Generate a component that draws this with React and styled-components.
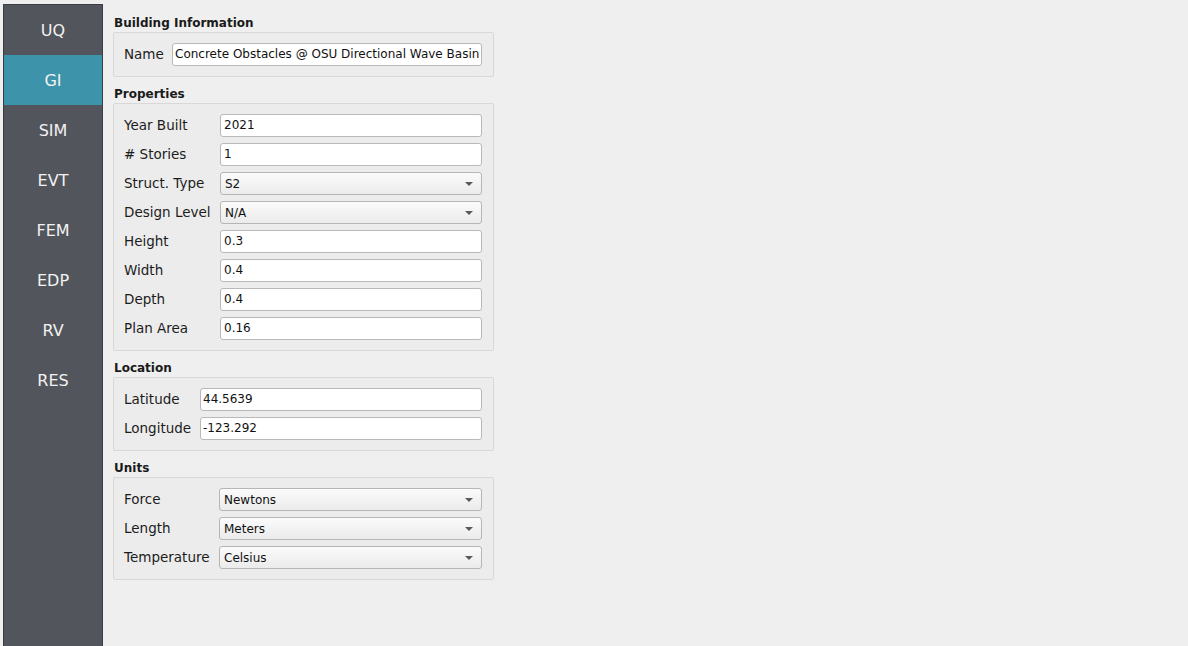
import React from 'react'
import styled, { createGlobalStyle } from 'styled-components'

const GlobalStyle = createGlobalStyle`
  html, body {
    margin: 0;
    padding: 0;
    background: #efefef;
    font-family: 'DejaVu Sans', 'Liberation Sans', sans-serif;
    color: #1a1a1a;
  }
`

const Window = styled.div({
  display: 'flex',
  flexDirection: 'row',
  alignItems: 'stretch',
  height: '646px',
  overflow: 'hidden',
})

const Sidebar = styled.div({
  flex: '0 0 98px',
  marginLeft: '3px',
  marginTop: '4px',
  display: 'flex',
  flexDirection: 'column',
  backgroundColor: '#52555c',
  border: '1px solid #3b3d42',
  borderBottom: 'none',
})

const NavItem = styled.div(({ active }) => ({
  height: '50px',
  display: 'flex',
  alignItems: 'center',
  justifyContent: 'center',
  fontSize: '16px',
  color: '#f2f2f2',
  backgroundColor: active ? '#3d93a9' : 'transparent',
}))

const Main = styled.div({
  flex: '0 0 381px',
  paddingLeft: '10px',
  paddingTop: '15px',
  display: 'flex',
  flexDirection: 'column',
})

const SectionTitle = styled.div(({ first }) => ({
  fontSize: '12px',
  fontWeight: 'bold',
  lineHeight: '16px',
  height: '16px',
  paddingLeft: '1px',
  marginTop: first ? '0' : '9px',
  marginBottom: '1px',
}))

const GroupBox = styled.div({
  border: '1px solid #d8d8d8',
  borderRadius: '2px',
  backgroundColor: '#ececec',
  padding: '10px 11px 10px 10px',
  display: 'grid',
  rowGap: '6px',
})

const Row = styled.div(({ labelWidth }) => ({
  display: 'grid',
  gridTemplateColumns: `${labelWidth}px 1fr`,
  alignItems: 'center',
  height: '23px',
}))

const Label = styled.span({
  fontSize: '13.5px',
  lineHeight: '16px',
  paddingBottom: '2px',
  color: '#1c1c1c',
  whiteSpace: 'nowrap',
})

const TextBox = styled.div(({ pad }) => ({
  height: '23px',
  boxSizing: 'border-box',
  border: '1px solid #b9b9b9',
  borderRadius: '3px',
  backgroundColor: '#ffffff',
  paddingLeft: `${pad}px`,
  fontSize: '12px',
  lineHeight: '21px',
  whiteSpace: 'nowrap',
  overflow: 'hidden',
  color: '#111',
}))

const Combo = styled.div({
  height: '23px',
  boxSizing: 'border-box',
  border: '1px solid #b6b6b6',
  borderRadius: '3px',
  background: 'linear-gradient(#fbfbfb, #ebebeb)',
  padding: '0 8px 0 4px',
  display: 'flex',
  alignItems: 'center',
  justifyContent: 'space-between',
  fontSize: '12px',
  color: '#111',
})

const Arrow = styled.span({
  width: 0,
  height: 0,
  borderLeft: '4px solid transparent',
  borderRight: '4px solid transparent',
  borderTop: '4px solid #5a5a5a',
})

const navItems = ['UQ', 'GI', 'SIM', 'EVT', 'FEM', 'EDP', 'RV', 'RES']

const sections = [
  {
    title: 'Building Information',
    labelWidth: 48,
    rows: [
      { label: 'Name', value: 'Concrete Obstacles @ OSU Directional Wave Basin', pad: 2 },
    ],
  },
  {
    title: 'Properties',
    labelWidth: 96,
    rows: [
      { label: 'Year Built', value: '2021' },
      { label: '# Stories', value: '1' },
      { label: 'Struct. Type', value: 'S2', combo: true },
      { label: 'Design Level', value: 'N/A', combo: true },
      { label: 'Height', value: '0.3' },
      { label: 'Width', value: '0.4' },
      { label: 'Depth', value: '0.4' },
      { label: 'Plan Area', value: '0.16' },
    ],
  },
  {
    title: 'Location',
    labelWidth: 76,
    rows: [
      { label: 'Latitude', value: '44.5639', pad: 2 },
      { label: 'Longitude', value: '-123.292', pad: 2 },
    ],
  },
  {
    title: 'Units',
    labelWidth: 95,
    rows: [
      { label: 'Force', value: 'Newtons', combo: true },
      { label: 'Length', value: 'Meters', combo: true },
      { label: 'Temperature', value: 'Celsius', combo: true },
    ],
  },
]

export default function App() {
  return (
    <>
      <GlobalStyle />
      <Window>
        <Sidebar>
          {navItems.map(item => (
            <NavItem key={item} active={item === 'GI'}>
              {item}
            </NavItem>
          ))}
        </Sidebar>
        <Main>
          {sections.map((section, i) => (
            <React.Fragment key={section.title}>
              <SectionTitle first={i === 0}>{section.title}</SectionTitle>
              <GroupBox>
                {section.rows.map(row => (
                  <Row key={row.label} labelWidth={section.labelWidth}>
                    <Label>{row.label}</Label>
                    {row.combo ? (
                      <Combo>
                        {row.value}
                        <Arrow />
                      </Combo>
                    ) : (
                      <TextBox pad={row.pad || 3}>{row.value}</TextBox>
                    )}
                  </Row>
                ))}
              </GroupBox>
            </React.Fragment>
          ))}
        </Main>
      </Window>
    </>
  )
}
